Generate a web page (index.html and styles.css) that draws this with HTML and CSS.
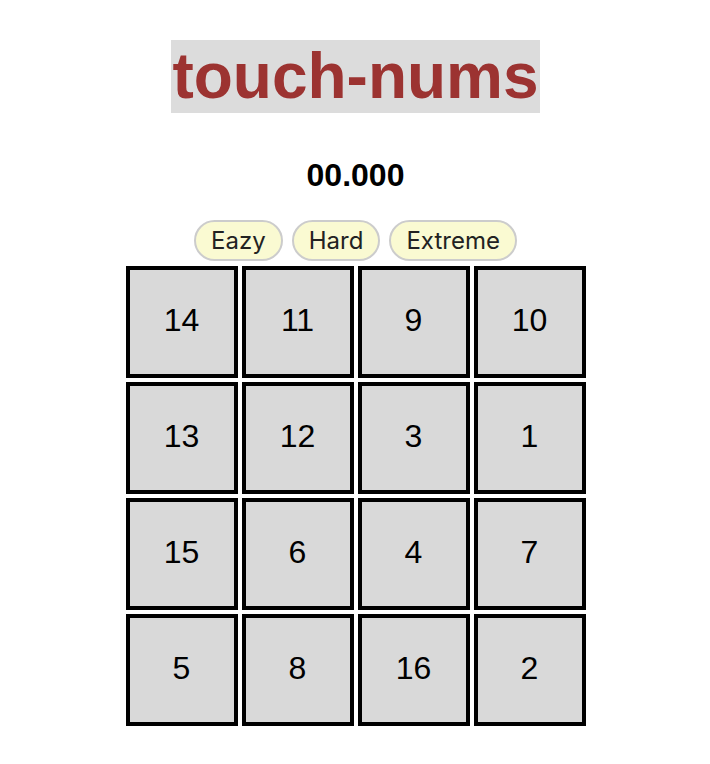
FILE: index.html
```html
<!DOCTYPE html>
<html>
<head>
<meta charset="utf-8">
<title>touch-nums</title>
<link rel="stylesheet" href="styles.css">
</head>
<body>
<div class="app">
  <h1 class="title">touch-nums</h1>
  <div class="timer">00.000</div>
  <div class="levels">
    <button class="level">Eazy</button>
    <button class="level">Hard</button>
    <button class="level">Extreme</button>
  </div>
  <div class="board">
    <div class="cell">14</div><div class="cell">11</div><div class="cell">9</div><div class="cell">10</div>
    <div class="cell">13</div><div class="cell">12</div><div class="cell">3</div><div class="cell">1</div>
    <div class="cell">15</div><div class="cell">6</div><div class="cell">4</div><div class="cell">7</div>
    <div class="cell">5</div><div class="cell">8</div><div class="cell">16</div><div class="cell">2</div>
  </div>
</div>
</body>
</html>
```
FILE: styles.css
```css
html, body {
  margin: 0;
  padding: 0;
  background: #ffffff;
}

body {
  font-family: "Liberation Sans", Arial, sans-serif;
  color: #000;
}

.app {
  display: flex;
  flex-direction: column;
  align-items: center;
  padding-top: 40px;
  padding-left: 1px;
}

.title {
  margin: 0;
  font-size: 64px;
  line-height: 73px;
  font-weight: bold;
  color: #9c3331;
  background: #dcdcdc;
  padding: 0 1px;
}

.timer {
  margin-top: 44px;
  font-size: 32px;
  line-height: 36px;
  font-weight: bold;
}

.levels {
  display: flex;
  gap: 9px;
  margin-top: 27px;
}

.level {
  height: 41px;
  padding: 0 15px;
  border: 2px solid #cccccc;
  border-radius: 21px;
  background: #fafad2;
  color: #222;
  font-family: Inter, "Liberation Sans", sans-serif;
  font-size: 24px;
  line-height: 1;
}

.board {
  display: grid;
  grid-template-columns: repeat(4, 112px);
  grid-auto-rows: 112px;
  gap: 4px;
  margin-top: 5px;
}

.cell {
  box-sizing: border-box;
  border: 4px solid #000;
  background: #d9d9d9;
  display: flex;
  align-items: center;
  justify-content: center;
  padding-bottom: 4px;
  font-size: 32px;
}
```
